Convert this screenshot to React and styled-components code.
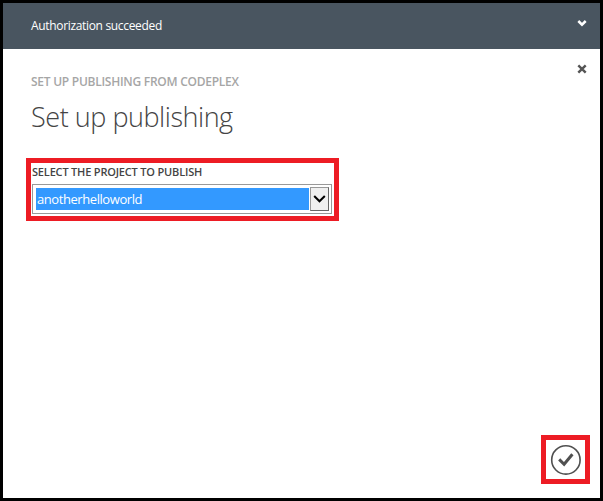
import React from "react";
import styled, { createGlobalStyle } from "styled-components";

const GlobalStyle = createGlobalStyle`
  *, *::before, *::after { box-sizing: border-box; }
  body { margin: 0; background: #fff; font-family: "Open Sans", "Noto Sans", sans-serif; }
`;

const Dialog = styled.div`
  width: 603px;
  height: 501px;
  border: 3px solid #000;
  background: #fff;
  display: flex;
  flex-direction: column;
`;

const StatusBar = styled.header`
  height: 46px;
  flex: none;
  background: #495560;
  color: #fff;
  display: flex;
  justify-content: space-between;
  padding: 0 13px 0 28px;
`;

const StatusText = styled.span`
  font-size: 12px;
  line-height: 16px;
  margin-top: 15px;
  letter-spacing: -0.33px;
`;

const IconButton = styled.button`
  appearance: none;
  border: 0;
  padding: 0;
  background: none;
  width: 10px;
  height: 10px;
  margin-top: ${(p) => p.$top}px;
  svg { display: block; }
`;

const Content = styled.main`
  flex: 1;
  display: flex;
  flex-direction: column;
  align-items: flex-start;
  padding: 0 10px 14px 23px;
`;

const Heading = styled.div`
  width: 100%;
  height: 109px;
  padding: 0 3px 0 5px;
  display: flex;
  justify-content: space-between;
`;

const Eyebrow = styled.div`
  margin-top: 25px;
  font-size: 12px;
  line-height: 16px;
  font-weight: 600;
  letter-spacing: -0.26px;
  color: #a6a6a6;
  white-space: nowrap;
`;

const Title = styled.h1`
  margin: 8px 0 0;
  font-size: 27px;
  line-height: 38px;
  font-weight: 300;
  letter-spacing: -0.46px;
  color: #444;
  white-space: nowrap;
`;

const Highlight = styled.div`
  border: 5px solid #ed1c24;
`;

const FieldHighlight = styled(Highlight)`
  width: 313px;
  height: 63px;
  padding-left: 1px;
`;

const Label = styled.div`
  height: 21px;
  padding-top: 1px;
  font-size: 11px;
  line-height: 16px;
  font-weight: 600;
  letter-spacing: -0.18px;
  color: #444;
  white-space: nowrap;
`;

const Select = styled.div`
  width: 300px;
  height: 30px;
  border: 1px solid #999;
  padding: 2px;
  display: flex;
  justify-content: space-between;
  align-items: center;
`;

const Selected = styled.div`
  width: 273px;
  height: 22px;
  margin-left: 1px;
  padding-left: 1px;
  background: #3399ff;
  color: #fff;
  font-size: 13px;
  line-height: 22px;
  letter-spacing: -0.43px;
`;

const Arrow = styled.div`
  width: 19px;
  height: 24px;
  border: 1px solid #999;
  border-right-color: #666;
  border-bottom-color: #666;
  background: #f0f0f0;
  display: grid;
  place-items: center;
`;

const ConfirmHighlight = styled(Highlight)`
  width: 49px;
  height: 49px;
  margin-top: auto;
  align-self: flex-end;
  display: grid;
  place-items: center;
  svg { display: block; }
`;

export default function App() {
  return (
    <>
      <GlobalStyle />
      <Dialog>
        <StatusBar>
          <StatusText>Authorization succeeded</StatusText>
          <IconButton $top={15} aria-label="Collapse">
            <svg width="10" height="10" viewBox="0 0 10 10">
              <path d="M1.3 3 5 6.7 8.7 3" fill="none" stroke="#fff" strokeWidth="2.5" />
            </svg>
          </IconButton>
        </StatusBar>
        <Content>
          <Heading>
            <div>
              <Eyebrow>SET UP PUBLISHING FROM CODEPLEX</Eyebrow>
              <Title>Set up publishing</Title>
            </div>
            <IconButton $top={15} aria-label="Close">
              <svg width="10" height="10" viewBox="0 0 10 10">
                <path d="M1.3 1.3 8.7 8.7M8.7 1.3 1.3 8.7" stroke="#555" strokeWidth="2.4" />
              </svg>
            </IconButton>
          </Heading>
          <FieldHighlight>
            <Label>SELECT THE PROJECT TO PUBLISH</Label>
            <Select>
              <Selected>anotherhelloworld</Selected>
              <Arrow>
                <svg width="13" height="10" viewBox="0 0 13 10">
                  <path d="M1.2 2 6.5 7.3 11.8 2" fill="none" stroke="#000" strokeWidth="2" />
                </svg>
              </Arrow>
            </Select>
          </FieldHighlight>
          <ConfirmHighlight>
            <svg width="31" height="31" viewBox="0 0 31 31">
              <circle cx="15.9" cy="15.9" r="14.2" fill="none" stroke="#505050" strokeWidth="1.6" />
              <path d="M9.2 15.4 14.1 20.2 22.4 10.2" fill="none" stroke="#505050" strokeWidth="3" />
            </svg>
          </ConfirmHighlight>
        </Content>
      </Dialog>
    </>
  );
}
